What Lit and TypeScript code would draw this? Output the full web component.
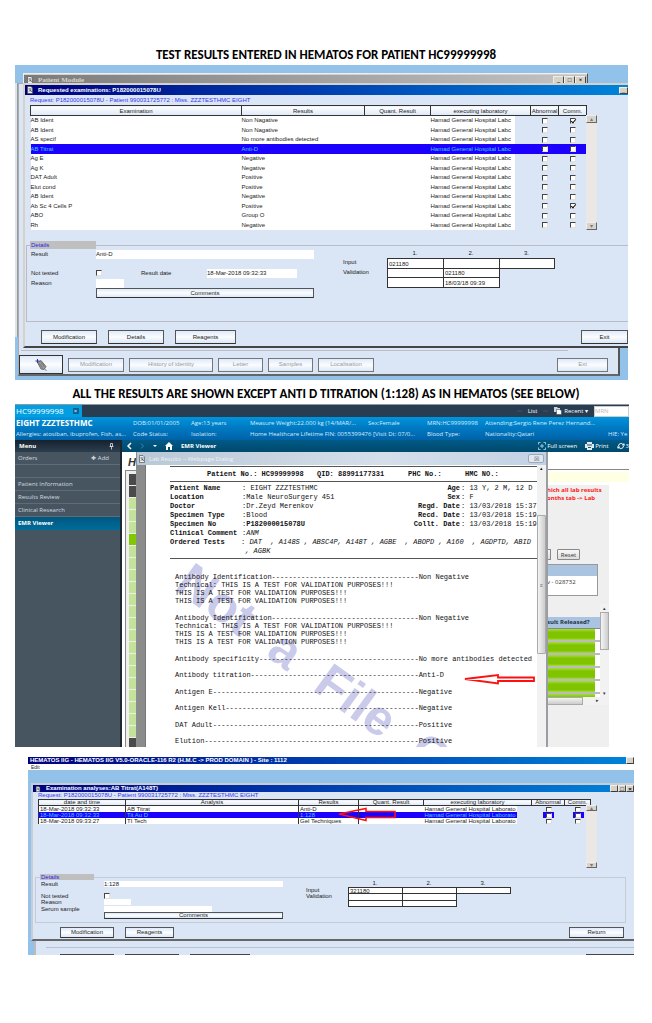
import { LitElement, html, css, svg } from "lit";
import { customElement } from "lit/decorators.js";
import { classMap } from "lit/directives/class-map.js";

const base = css`
  * { box-sizing: border-box; }
  :host { display: block; }
  button, input { font: inherit; color: inherit; margin: 0; padding: 0; border-radius: 0; min-width: 0; outline: none; }
  input[type="checkbox"] {
    appearance: none; display: block; width: 6px; height: 6px; background: #fff; position: relative;
    border: 1px solid #e4e0d8; border-top-color: #444; border-left-color: #444;
  }
  input[type="checkbox"]:checked::before {
    content: ""; position: absolute; left: 1px; top: -1px; width: 2px; height: 4px;
    border: solid #111; border-width: 0 1px 1px 0; transform: rotate(40deg);
  }
`;

/* Look shared by both laboratory client windows */
const client = css`
  .desk { position: relative; overflow: hidden; background: #92c1e9; font: 6px/9px "Liberation Sans", Arial, sans-serif; color: #222; }
  .title {
    display: flex; align-items: center; gap: 5px; color: #fff; font-weight: 700; white-space: nowrap;
    background: linear-gradient(90deg, #00007c, #003aae 45%, #0084da);
  }
  .title svg { width: 6px; height: 8px; flex: none; }
  .grow { flex: 1; }
  .wb { width: 9px; height: 7px; background: #d6d2c8; border: 1px solid #eee; border-right-color: #444; border-bottom-color: #444; font-size: 6px; line-height: 4px; color: #000; }
  .request { color: #3c34f4; white-space: nowrap; }
  .push { background: linear-gradient(#dfeafa, #fbfdff 50%, #dbe8f8); border: 1px solid #555; border-bottom-color: #333; text-align: center; white-space: nowrap; }
  .push:disabled { color: #999; border-color: #777; }
  table { border-collapse: collapse; table-layout: fixed; width: 100%; }
  th { font-weight: 400; padding: 0; border: 1px solid #333; background: linear-gradient(#fff, #dde8f7); white-space: nowrap; }
  td { padding: 0; background: #fff; white-space: nowrap; }
  td.none { background: transparent; }
  td.none input { margin: 0 auto; }
  tr.sel td { background: #1c00ff; color: #34d0ff; }
  .bar { width: 11px; display: flex; flex-direction: column; justify-content: space-between; background: #ebe7e4; }
  .bar button { border: 1px solid #eee; border-right-color: #666; border-bottom-color: #666; background: #d8d4cc; color: #777; }
  .scrollrow { display: flex; }
  fieldset { margin: 0; padding: 0; min-width: 0; border: 1px solid #b9bcc4; }
  legend { background: #bfbfbf; color: #2a20f0; padding: 0 1px; }
  .field { border: 0; background: #fff; width: 100%; display: block; }
  .boxed { border: 1px solid #333; background: #fff; width: calc(100% + 1px); height: calc(100% + 1px); display: block; padding-left: 1px; }
  .c { text-align: center; }
`;

const fileIcon = svg`<path d="M0.5 0.5h3.5l1.5 1.5v5.5h-5z" fill="#e8eef4" stroke="#444" stroke-width=".6"/><path d="M1.5 3h3M2 5.5l1.5-1.5 1 2" stroke="#333" stroke-width=".8" fill="none"/>`;

@customElement("exam-window")
class ExamWindow extends LitElement {
  static styles = [base, client, css`
    .desk { height: 315px; }
    .edge { position: absolute; left: 0; top: 18px; width: 3px; height: 254px; background: #dbe3ee; border-right: 1px solid #999; }
    .back { position: absolute; left: 3px; right: 8px; top: 18px; bottom: 4px; background: #dae5f5; border: 1px solid #aaa; border-right: 2px solid #555; border-bottom: 2px solid #666; display: flex; flex-direction: column; justify-content: flex-end; }
    .rule { border-top: 1px solid #bdbdc4; margin: 0 50px 4px 2px; }
    .tools { display: flex; align-items: center; gap: 5px; padding-right: 5px; }
    .tools .push { height: 14px; }
    .tools .icon { width: 44px; height: 19px; border-color: #333; }
    .icon svg { width: 14px; height: 14px; display: block; margin: 0 auto; }
    .patient { position: absolute; left: 8px; right: 40px; top: 8px; height: 14px; background: #d6d2c8; border: 1px solid #eee; border-right-color: #555; padding-top: 1px; }
    .patient .title { height: 10px; background: linear-gradient(90deg, #7b7b7b, #c3c3c3); color: #d8d4c8; padding: 0 1px 0 3px; font-family: "Liberation Serif", serif; font-size: 7px; }
    .patient .wb { margin-left: -5px; width: 11px; height: 9px; line-height: 5px; }
    .front { position: absolute; left: 8px; right: 0; top: 18px; height: 265px; background: #dae5f5; border: 2px solid #d6d2c8; border-right: 0; border-bottom: 2px solid #444; }
    .front > .title { height: 10px; padding-left: 2px; }
    .request { padding: 1px 0 0 5px; height: 10px; }
    .list { padding-left: 5px; }
    .list .tbl { width: 556px; flex: none; }
    .tbl table { height: 125px; }
    .tbl th { height: 10px; line-height: 8px; }
    .tbl td { line-height: 9px; }
    .bar { margin-top: 10px; height: 115px; }
    .bar button { height: 8px; line-height: 5px; }
    td.lab { background: linear-gradient(90deg, #fff 84px, transparent 84px); }
    fieldset { height: 81px; margin: 11px 0 0 1px; border-right: 0; }
    legend { width: 66px; margin-left: 3px; height: 8px; line-height: 8px; }
    .details { display: flex; gap: 29px; padding-left: 4px; }
    .left { display: grid; grid-template-columns: 65px 45px 66px 90px 17px; grid-template-rows: 9px 9px 10px 10px 10px; align-items: center; padding-top: 1px; }
    .left .field { height: 9px; }
    .wide { grid-column: 2 / 6; }
    .left .push { height: 10px; line-height: 8px; }
    .right { display: grid; grid-template-columns: 44px 56px 56px 55px; grid-template-rows: 9px 10px 9px 10px; line-height: 9px; }
    .actions { display: flex; gap: 11px; padding: 8px 0 0 16px; }
    .actions .push { height: 14px; }
  `];
  rows = [
    ["AB Ident", "Non Nagative", 1], ["AB Ident", "Non Nagative", 0], ["AS specif", "No more antibodies detected", 0],
    ["AB Titrat", "Anti-D", 0], ["Ag E", "Negative", 0], ["Ag K", "Negative", 0], ["DAT Adult", "Positive", 0],
    ["Elut cond", "Positive", 0], ["AB Ident", "Negative", 0], ["Ab Sc 4 Cells P", "Positive", 1], ["ABO", "Group O", 0], ["Rh", "Negative", 0],
  ];
  render() {
    const tool = (t: string, w: number) => html`<button class="push" disabled style="width:${w}px">${t}</button>`;
    return html`<section class="desk">
      <div class="edge"></div>
      <div class="back">
        <div class="rule"></div>
        <div class="tools">
          <button class="push icon" aria-label="Tools"><svg viewBox="0 0 14 14"><path d="M3.500 4.500L7 2.500 12 8.500 10 11.500 7 11z" fill="#999" stroke="#555" stroke-width=".8"/><path d="M5 5.500l3.500 4M7 4.500l3.500 4M10.500 10.500l2 2.500" stroke="#666" stroke-width=".8"/><path d="M1.500 3h4M3.500 1v4" stroke="#33a"/></svg></button>
          ${tool("Modification", 56)}${tool("History of identity", 84)}${tool("Letter", 45)}${tool("Samples", 45)}${tool("Localisation", 56)}
          <span class="grow"></span>${tool("Ext", 51)}<span></span>
        </div>
      </div>
      <div class="patient"><div class="title"><svg viewBox="0 0 6 8">${fileIcon}</svg>Patient Module<span class="grow"></span>
        <button class="wb" aria-label="Minimise">_</button><button class="wb" aria-label="Maximise">□</button><button class="wb" aria-label="Close">×</button></div></div>
      <div class="front">
        <div class="title"><svg viewBox="0 0 6 8">${fileIcon}</svg>Requested examinations: P182000015078U<span class="grow"></span><button class="wb" aria-label="Minimise">_</button></div>
        <div class="request">Request: P182000015078U - Patient 990031725772 : Miss. ZZZTESTHMC EIGHT</div>
        <div class="list scrollrow">
          <div class="tbl"><table>
            <colgroup><col style="width:211px"><col style="width:123px"><col style="width:66px"><col style="width:100px"><col style="width:28px"><col style="width:28px"></colgroup>
            <thead><tr><th>Examination</th><th>Results</th><th>Quant. Result</th><th>executing laboratory</th><th>Abnormal</th><th>Comm.</th></tr></thead>
            <tbody>${this.rows.map((r, i) => html`<tr class=${classMap({ sel: i === 3 })}>
              <td>${r[0]}</td><td>${r[1]}</td><td></td><td class="lab">Hamad General Hospital Labc</td>
              <td class="none"><input type="checkbox" aria-label="Abnormal"></td><td class="none"><input type="checkbox" aria-label="Comment" ?checked=${r[2] === 1}></td></tr>`)}</tbody>
          </table></div>
          <div class="bar"><button aria-label="Up">▴</button><button aria-label="Down">▾</button></div>
        </div>
        <fieldset><legend>Details</legend><div class="details">
          <div class="left">
            <label for="res">Result</label><div class="wide"><input id="res" class="field" value="Anti-D"></div>
            <span style="grid-column:1/6"></span>
            <label for="nt">Not tested</label><input id="nt" type="checkbox"><label for="rd">Result date</label><input id="rd" class="field" value="18-Mar-2018 09:32:33"><span></span>
            <label for="rs">Reason</label><div style="width:28px"><input id="rs" class="field"></div><span style="grid-column:3/6"></span>
            <span></span><button class="push wide">Comments</button>
          </div>
          <div class="right">
            <span></span><span class="c">1.</span><span class="c">2.</span><span class="c">3.</span>
            <span>Input</span><input class="boxed" aria-label="Input 1" value="021180"><input class="boxed" aria-label="Input 2"><input class="boxed" aria-label="Input 3">
            <span>Validation</span><input class="boxed" aria-label="Validation 1"><input class="boxed" aria-label="Validation 2" value="021180"><span></span>
            <span></span><input class="boxed" aria-label="Validation date 1"><input class="boxed" aria-label="Validation date 2" value="18/03/18 09:39">
          </div>
        </div></fieldset>
        <div class="actions"><button class="push" style="width:56px">Modification</button><button class="push" style="width:56px">Details</button><button class="push" style="width:61px">Reagents</button><span class="grow"></span><button class="push" style="width:47px">Exit</button></div>
      </div>
    </section>`;
  }
}

@customElement("lab-dialog")
class LabDialog extends LitElement {
  static styles = [base, css`
    :host { display: flex; flex-direction: column; background: #fff; border-left: 1px solid #8a8d92; border-right: 2px solid #9a9da2; color: #111; }
    .head { height: 13px; flex: none; display: flex; align-items: center; gap: 4px; padding: 0 2px 0 2px; background: linear-gradient(90deg, #b9c8d6, #d4dfea 60%, #c2d2e4); color: #eef2f6; font: 6px/10px "Open Sans", sans-serif; }
    .head svg { width: 6px; height: 8px; }
    .head button { margin-left: auto; width: 16px; height: 9px; border: 1px solid #9aa8b8; border-radius: 2px; background: #dfe7f0; color: #555; font-size: 6px; line-height: 6px; }
    .body { flex: 1; display: flex; min-height: 0; }
    .gut { width: 9px; background: #8b8b8b; border-right: 1px solid #777; }
    .doc { flex: 1; min-width: 0; position: relative; overflow: hidden; padding: 1px 0 0 24px; font: 7px/8px "Liberation Mono", "Courier New", monospace; white-space: nowrap; z-index: 0; }
    .sb { width: 9px; background: #f1f1f1; display: flex; flex-direction: column; font-size: 5px; line-height: 6px; text-align: center; }
    .thumb { margin-top: 44px; height: 139px; border: 1px solid #aaa; border-radius: 1px; background: linear-gradient(90deg, #f4f4f4, #ccc); display: grid; place-items: center; color: #666; }
    .ids { border: solid #555; border-width: 1px 0; height: 16px; line-height: 15px; display: grid; grid-template-columns: 110px 91px 57px 1fr; padding-left: 37px; font-weight: 700; }
    .info { display: grid; grid-template-columns: 71px 130px 89px 1fr; line-height: 9px; padding-top: 2px; height: 77px; border-bottom: 1px solid #555; align-content: start; }
    .info b.r { text-align: right; }
    .info .v { white-space: pre; padding-left: 1px; }
    .info .span { grid-column: 2 / 5; white-space: pre; }
    .res { padding: 14px 0 0 5px; display: flex; flex-direction: column; gap: 9px; }
    .singles { display: flex; flex-direction: column; justify-content: space-between; height: 90px; }
    .line { display: flex; }
    .mark { position: absolute; z-index: -1; left: 37px; top: 82px; transform: rotate(36deg); transform-origin: 0 50%; display: flex; gap: 30px; color: #cacaea; font: 700 50px/56px "Liberation Sans", sans-serif; }
    .arrow { position: absolute; left: 316px; top: 208px; width: 74px; height: 12px; }
  `];
  line(a: string, b: string) {
    return html`<div class="line"><span>${a.padEnd(58, "-")}</span><span>${b}</span></div>`;
  }
  render() {
    const t = "THIS IS A TEST FOR VALIDATION PURPOSES!!!";
    const group = html`<div>${this.line("Antibody Identification", "Non Negative")}<div>Technical: ${t}</div><div>${t}</div><div>${t}</div></div>`;
    const row = (a: string, v: unknown, b: string, c: string) => html`<b>${a}</b><span class="v">:${v}</span><b class="r">${b}</b><span class="v">${c ? ": " + c : ""}</span>`;
    return html`
      <div class="head"><svg viewBox="0 0 6 8">${fileIcon}</svg><span>Lab Results -- Webpage Dialog</span><button aria-label="Close">☒</button></div>
      <div class="body"><div class="gut"></div>
        <div class="doc"><div class="mark" aria-hidden="true"><span>Not</span><span>a</span><span>File</span><span>C</span></div>
          <div class="ids"><span>Patient No.: HC99999998</span><span>QID: 88991177331</span><span>PHC No.:</span><span>HMC NO.:</span></div>
          <div class="info">${row("Patient Name", " EIGHT ZZZTESTHMC", "Age", "13 Y, 2 M, 12 D")}${row("Location", "Male NeuroSurgery 451", "Sex", "F")}${row("Doctor", "Dr.Zeyd Merenkov", "Regd. Date", "13/03/2018 15:37")}${row("Specimen Type", "Blood", "Recd. Date", "13/03/2018 15:19")}${row("Specimen No", html`<b>P182000015078U</b>`, "Collt. Date", "13/03/2018 15:19")}${row("Clinical Comment", html`<i>ANM</i>`, "", "")}<b>Ordered Tests</b><span class="span">: <i>DAT  , A148S , ABSC4P, A148T , AGBE  , ABOPD , A160  , AGDPTD, ABID</i></span><span></span><i class="span"> , AGBK</i></div>
          <div class="res">${group}${group}<div class="singles">${[["Antibody specificity", "No more antibodies detected"], ["Antibody titration", "Anti-D"], ["Antigen E", "Negative"], ["Antigen Kell", "Negative"], ["DAT Adult", "Positive"], ["Elution", "Positive"]].map((x) => this.line(x[0], x[1]))}</div></div>
          <svg class="arrow" viewBox="0 0 74 12"><path d="M3 6L36 2V4.500H72V8H36V10.500Z" fill="#fff" stroke="#ff1010" stroke-width="1.800"/></svg>
        </div>
        <div class="sb">▴<div class="thumb">≡</div></div>
      </div>`;
  }
}

@customElement("emr-window")
class EmrWindow extends LitElement {
  static styles = [base, css`
    :host { font: 6px/10px "Open Sans", "Noto Sans", sans-serif; color: #fff; white-space: nowrap; }
    .win { height: 343px; display: flex; flex-direction: column; overflow: hidden; }
    .top { height: 13px; flex: none; background: #283d52; border-top: 1px solid #8d99a3; display: flex; align-items: center; }
    .tab { width: 67px; height: 12px; background: #019fe2; display: flex; align-items: center; gap: 9px; padding-left: 1px; font-size: 8px; border: 0; }
    .tab i { width: 6px; height: 6px; background: #08618e; font: 6px/6px "Open Sans", sans-serif; text-align: center; }
    .quick { margin-left: auto; display: flex; align-items: center; gap: 6px; }
    .quick span { display: flex; align-items: center; gap: 2px; }
    .quick svg { width: 8px; height: 8px; }
    .quick .dim { color: #4e6274; }
    .quick input { width: 35px; height: 11px; border: 1px solid #ccc; background: #fff; }
    .quick input::placeholder { color: #bbb; }
    .pat { height: 23px; flex: none; background: linear-gradient(#0094dd, #0078c1 50%, #0062a8); display: grid; grid-template-columns: 117px 58px 59px 118px 59px 58px 123px 1fr; grid-template-rows: 12px 10px; align-items: center; padding: 0 0 0 1px; color: #d6ecfa; }
    .pat b { font-size: 8px; color: #fff; }
    .two { grid-column: span 2; }
    .main { flex: 1; display: flex; min-height: 0; }
    nav { width: 107px; background: #475561; border-right: 2px solid #1d2730; flex: none; color: #d4dbe0; }
    nav .mh { height: 12px; background: linear-gradient(#16222e, #2c3e4e); color: #fff; font-weight: 700; display: flex; justify-content: space-between; align-items: center; padding: 0 6px 0 4px; }
    nav .mh svg { width: 5px; height: 7px; }
    nav a { display: flex; justify-content: space-between; height: 13px; line-height: 13px; padding: 0 11px 0 3px; color: inherit; text-decoration: none; border-bottom: 1px solid #5f6c77; }
    nav a.on { background: linear-gradient(#00577f, #006c9b); color: #fff; font-weight: 700; border: 0; }
    .cont { flex: 1; position: relative; display: flex; flex-direction: column; background: #fff; min-width: 0; }
    .nb { height: 12px; flex: none; background: linear-gradient(#005a86, #00496c); display: flex; align-items: center; gap: 8px; padding: 0 0 0 5px; }
    .nb svg { height: 8px; flex: none; }
    .r { margin-left: auto; display: flex; gap: 8px; align-items: center; }
    .r span { display: flex; align-items: center; gap: 1px; }
    .page { flex: 1; display: flex; justify-content: space-between; min-height: 0; color: #333; }
    .strip { width: 14px; flex: none; display: flex; flex-direction: column; }
    .strip b { font: italic 700 11px/20px "Liberation Sans", sans-serif; padding-left: 6px; height: 18px; }
    .cells { flex: 1; margin-left: 3px; border-left: 1px solid #888; border-top: 1px solid #888; padding: 3px 0 0 3px; overflow: hidden; background: #eee; min-height: 0; }
    .cells div { height: 11px; margin-bottom: 1px; width: 7px; background: #c3e29a; }
    .cells .d { background: #4a4a4a; }
    .cells .g { background: #82c800; }
    .side { width: 82px; flex: none; display: flex; flex-direction: column; }
    .l1 { height: 18px; border-bottom: 1px solid #888; }
    .yel { height: 10px; margin: 2px 0 3px; background: #ffffe4; }
    .gray { flex: 1; width: 62px; background: #efefef; }
    .red { color: #ff1414; font-weight: 700; line-height: 8px; height: 64px; padding-top: 1px; }
    .btns { display: flex; gap: 6px; height: 15px; }
    .btns button { height: 11px; border: 1px solid #888; border-radius: 1px; background: linear-gradient(#f8f8f8, #ddd); width: 23px; line-height: 8px; }
    .btns .cut { width: 4px; border-left: 0; }
    .sel { width: 51px; border: 1px solid #999; border-left: 0; background: linear-gradient(#a9c3e0 11px, #fff 11px); height: 32px; padding-top: 12px; }
    .sc { display: flex; height: 93px; margin-top: 8px; }
    .gt { width: 53px; padding-top: 13px; overflow: hidden; }
    .gh { height: 12px; background: #a9c3e0; color: #234; font-weight: 700; border-bottom: 1px solid #888; }
    .gr { height: 13px; background: #fff; border-bottom: 2px solid #bbb; }
    .gr div { height: 11px; width: 48px; background: linear-gradient(#a4dc40, #80c400 30%, #80c400 80%, #a4dc40); }
    .vs { width: 9px; background: #f2f2f2; display: flex; flex-direction: column; text-align: center; font-size: 5px; line-height: 8px; }
    .vs i { height: 38px; border: 1px solid #aaa; background: linear-gradient(90deg, #f4f4f4, #ccc); }
    .vs s { margin-top: auto; text-decoration: none; }
    .hs { height: 8px; background: #f2f2f2; display: flex; justify-content: space-between; line-height: 7px; font-size: 5px; padding-right: 10px; }
    .hs i { width: 36px; border: 1px solid #aaa; background: linear-gradient(#f4f4f4, #ccc); }
    lab-dialog { position: absolute; left: 14px; right: 81px; top: 12px; bottom: 0; }
  `];
  render() {
    return html`<section class="win">
      <div class="top"><button class="tab">HC99999998 <i>×</i></button>
        <div class="quick"><span class="dim">⇦</span><span>List</span><span class="dim">⇨</span><span><svg viewBox="0 0 8 8"><path d="M0 0h3l1 1h2v4H0z" fill="#c9d3dc"/><path d="M2.500 2.500h3l.5.500h1.500V7.500h-5z" fill="#fff" stroke="#283d52" stroke-width=".5"/></svg>Recent ▾</span><input aria-label="MRN" placeholder="MRN"></div></div>
      <div class="pat"><b>EIGHT ZZZTESTHMC</b><span>DOB:01/01/2005</span><span>Age:13 years</span><span>Measure Weight:22.000 kg (14/MAR/...</span><span>Sex:Female</span><span>MRN:HC99999998</span><span>Attending:Sergio Rene Perez Hernand...</span><span></span>
        <span>Allergies: atosiban, ibuprofen, Fish, as...</span><span>Code Status:</span><span>Isolation:</span><span class="two">Home Healthcare Lifetime FIN: 0055399476 [Visit Dt: 07/0...</span><span>Blood Type:</span><span>Nationality:Qatari</span><span>HIE: Ye</span></div>
      <div class="main">
        <nav><div class="mh"><span>Menu</span><svg viewBox="0 0 5 7"><path d="M1.500.5h2v3h-2zM.5 3.500h4M2.500 3.500V6.500" stroke="#dde" stroke-width=".8" fill="none"/></svg></div>
          <a href="#">Orders<span>✚ Add</span></a><a href="#" aria-label="Blank"></a><a href="#">Patient Information</a><a href="#">Results Review</a><a href="#">Clinical Research</a><a href="#" class="on">EMR Viewer</a></nav>
        <div class="cont">
          <div class="nb">
            <svg viewBox="0 0 5 8" width="5"><path d="M4 1L1 4l3 3" stroke="#fff" stroke-width="1.500" fill="none"/></svg>
            <svg viewBox="0 0 5 8" width="5"><path d="M1 1.500l2.500 2.500L1 6.500" stroke="#3d86a8" fill="none"/></svg>
            <svg viewBox="0 0 4 8" width="4"><path d="M0 3h4L2 5z" fill="#fff"/></svg>
            <svg viewBox="0 0 8 8" width="8"><path d="M0 4l4-4 4 4H7v4H5V5H3v3H1V4z" fill="#fff"/></svg>
            <b>EMR Viewer</b>
            <div class="r"><span><svg viewBox="0 0 8 8" width="8"><path d="M.5 2.500v-2h2M5.500.5h2v2M7.500 5.500v2h-2M2.500 7.500h-2v-2M3 3h2v2H3z" stroke="#bfe0ee" stroke-width=".8" fill="none"/></svg>Full screen</span>
              <span><svg viewBox="0 0 9 8" width="9"><path d="M2 0h5v2h2v4H7v2H2V6H0V2h2z" fill="#dfe9ee"/><path d="M2 3h5M3 5.500h3" stroke="#256"/></svg>Print</span>
              <span><svg viewBox="0 0 8 8" width="8"><path d="M1.500 4a2.500 2.500 0 0 1 4.500-1.500M6.500 4a2.500 2.500 0 0 1-4.500 1.500" stroke="#fff" fill="none"/><path d="M5 3.500h3L7 1zM3 4.500H0L1 7z" fill="#fff"/></svg>3</span></div>
          </div>
          <div class="page">
            <div class="strip"><b>H</b><div class="cells">${Array.from({ length: 23 }, (_, i) => html`<div class=${classMap({ d: i < 2 || i === 22, g: i === 5 })}></div>`)}</div></div>
            <div class="side"><div class="l1"></div><div class="yel"></div><div class="gray">
              <div class="red">hich all lab results<br>onths tab -&gt; Lab</div>
              <div class="btns"><button class="cut" aria-label="Search"></button><button>Reset</button></div>
              <div class="sel">v - 028732</div>
              <div class="sc"><div class="gt"><div class="gh">sult Released?</div>${[1, 2, 3, 4, 5, 6].map(() => html`<div class="gr"><div></div></div>`)}</div><div class="vs">▴<i></i><s>▾</s></div></div>
              <div class="hs"><i></i>▸</div>
            </div></div>
          </div>
          <lab-dialog></lab-dialog>
        </div>
      </div>
    </section>`;
  }
}

@customElement("analysis-window")
class AnalysisWindow extends LitElement {
  static styles = [base, client, css`
    .desk { height: 198px; line-height: 7px; }
    .app { height: 7px; font-size: 6px; padding-left: 2px; }
    .wb { height: 7px; width: 8px; }
    .menu { height: 6px; background: #fff; font-size: 5px; line-height: 6px; padding-left: 3px; }
    .front { position: absolute; left: 3px; right: 0; top: 26px; height: 158px; background: #dae5f5; border: 2px solid #c9cdd2; border-right: 0; border-bottom: 2px solid #666; }
    .front > .title { height: 7px; padding-left: 2px; }
    .front > .title svg { height: 6px; }
    .wbs { display: flex; }
    .request { height: 7px; padding-left: 5px; }
    .list { padding-left: 5px; position: relative; }
    .tbl { width: 548px; flex: none; }
    th { height: 6px; line-height: 5px; }
    td { height: 6px; line-height: 6px; padding-left: 1px; border-left: 1px solid #333; }
    td.none, td.lab { border-left: 0; }
    td.lab { background: linear-gradient(90deg, #fff 93px, transparent 93px); }
    tr.sel td.lab { background: linear-gradient(90deg, #1c00ff 93px, transparent 93px); }
    tr.sel td.none { background: linear-gradient(90deg, transparent 11px, #1c00ff 11px, #1c00ff 22px, transparent 22px); }
    tr.sel td.none:last-child { background: linear-gradient(90deg, transparent 8px, #1c00ff 8px, #1c00ff 19px, transparent 19px); }
    td.none input { height: 5px; }
    .bar { margin: 6px 0 0 0; height: 63px; }
    .bar button { height: 6px; line-height: 3px; }
    .arrow { position: absolute; left: 304px; top: 8px; width: 60px; height: 15px; }
    fieldset { height: 49px; margin: 6px 8px 0 2px; border-color: #c4cbd6; }
    legend { width: 54px; height: 6px; line-height: 6px; margin-left: 4px; }
    .details { display: flex; gap: 23px; padding-left: 5px; }
    .left { display: grid; grid-template-columns: 63px 179px; grid-template-rows: 7px 6px 6px 6px 7px 7px; line-height: 6px; align-items: center; }
    .left .field { height: 6px; }
    .left .push { height: 7px; line-height: 5px; }
    .right { display: grid; grid-template-columns: 42px 54px 54px 54px; grid-template-rows: 7px 6px 7px 6px; line-height: 6px; }
    .actions { display: flex; gap: 11px; padding: 4px 10px 0 27px; }
    .actions .push { height: 11px; line-height: 9px; }
    .under { position: absolute; left: 6px; right: 0; bottom: 0; height: 14px; background: #dae5f5; border-left: 2px solid #bbb; display: flex; flex-direction: column; justify-content: space-between; }
    .under hr { margin: 6px 0 0 10px; border: 0; border-top: 1px solid #b9c2d0; width: 100%; }
    .tops { display: flex; gap: 11px; padding-left: 24px; }
    .tops span { border-top: 1px solid #444; }
  `];
  rows = [["18-Mar-2018 09:32:33", "AB Titrat", "Anti-D"], ["18-Mar-2018 09:32:33", "Tit Au D", "1:128"], ["18-Mar-2018 09:33:27", "TI Tech", "Gel Techniques"]];
  render() {
    return html`<section class="desk">
      <div class="title app"><span>HEMATOS IIG - HEMATOS IIG V5.0-ORACLE-116 R2 (H.M.C -&gt; PROD DOMAIN ) - Site : 1112</span><span class="grow"></span><button class="wb" aria-label="Minimise">_</button></div>
      <div class="menu">Edit</div>
      <div class="under"><hr><div class="tops"><span style="width:54px"></span><span style="width:54px"></span><span style="width:60px"></span><i class="grow"></i><span style="width:48px"></span></div></div>
      <div class="front">
        <div class="title"><svg viewBox="0 0 6 8">${fileIcon}</svg>Examination analyses:AB Titrat(A148T)<span class="grow"></span><span class="wbs"><button class="wb" aria-label="Minimise">_</button><button class="wb" aria-label="Maximise">□</button><button class="wb" aria-label="Close">×</button></span></div>
        <div class="request">Request: P182000015078U - Patient 990031725772 : Miss. ZZZTESTHMC EIGHT</div>
        <div class="list scrollrow">
          <div class="tbl"><table>
            <colgroup><col style="width:87px"><col style="width:173px"><col style="width:60px"><col style="width:65px"><col style="width:108px"><col style="width:33px"><col style="width:26px"></colgroup>
            <thead><tr><th>date and time</th><th>Analysis</th><th>Results</th><th>Quant. Result</th><th>executing laboratory</th><th>Abnormal</th><th>Comm.</th></tr></thead>
            <tbody>${this.rows.map((r, i) => html`<tr class=${classMap({ sel: i === 1 })}><td>${r[0]}</td><td>${r[1]}</td><td>${r[2]}</td><td></td><td class="lab">Hamad General Hospital Laborato</td><td class="none"><input type="checkbox" aria-label="Abnormal"></td><td class="none"><input type="checkbox" aria-label="Comment"></td></tr>`)}</tbody>
          </table></div>
          <div class="bar"><button aria-label="Up">▴</button><button aria-label="Down">▾</button></div>
          <svg class="arrow" viewBox="0 0 60 15"><path d="M2 7L29 1.500V4.500H58V10.500H29V13.500Z" fill="none" stroke="#ff1010" stroke-width="1.500"/></svg>
        </div>
        <fieldset><legend>Details</legend><div class="details">
          <div class="left">
            <label for="res">Result</label><input id="res" class="field" value="1:128"><span></span><span></span>
            <label for="nt">Not tested</label><input id="nt" type="checkbox">
            <label for="rs">Reason</label><div style="width:27px"><input id="rs" class="field"></div>
            <label for="ss">Serum sample</label><div style="width:108px"><input id="ss" class="field"></div>
            <span></span><button class="push">Comments</button>
          </div>
          <div class="right">
            <span></span><span class="c">1.</span><span class="c">2.</span><span class="c">3.</span>
            <span>Input</span><input class="boxed" aria-label="Input 1" value="321180"><input class="boxed" aria-label="Input 2"><input class="boxed" aria-label="Input 3">
            <span>Validation</span><input class="boxed" aria-label="Validation 1"><input class="boxed" aria-label="Validation 2"><span></span>
            <span></span><input class="boxed" aria-label="Date 1"><input class="boxed" aria-label="Date 2">
          </div>
        </div></fieldset>
        <div class="actions"><button class="push" style="width:54px">Modification</button><button class="push" style="width:49px">Reagents</button><span class="grow"></span><button class="push" style="width:55px">Return</button></div>
      </div>
    </section>`;
  }
}

@customElement("app-root")
class AppRoot extends LitElement {
  static styles = [base, css`
    :host { background: #fff; color: #000; padding: 44px 0 68px; }
    h1, h2 { margin: 0; text-align: center; font: 700 13px/21px Carlito, Calibri, Lato, sans-serif; white-space: nowrap; }
    h2 { padding-top: 3px; }
    exam-window { margin: 0 24px 0 15px; }
    emr-window { margin: 0 23px 0 15px; }
    analysis-window { margin: 10px 18px 0 28px; }
  `];
  render() {
    return html`<main>
      <h1>TEST RESULTS ENTERED IN HEMATOS FOR PATIENT HC99999998</h1>
      <exam-window></exam-window>
      <h2>ALL THE RESULTS ARE SHOWN EXCEPT ANTI D TITRATION (1:128) AS IN HEMATOS (SEE BELOW)</h2>
      <emr-window></emr-window>
      <analysis-window></analysis-window>
    </main>`;
  }
}
